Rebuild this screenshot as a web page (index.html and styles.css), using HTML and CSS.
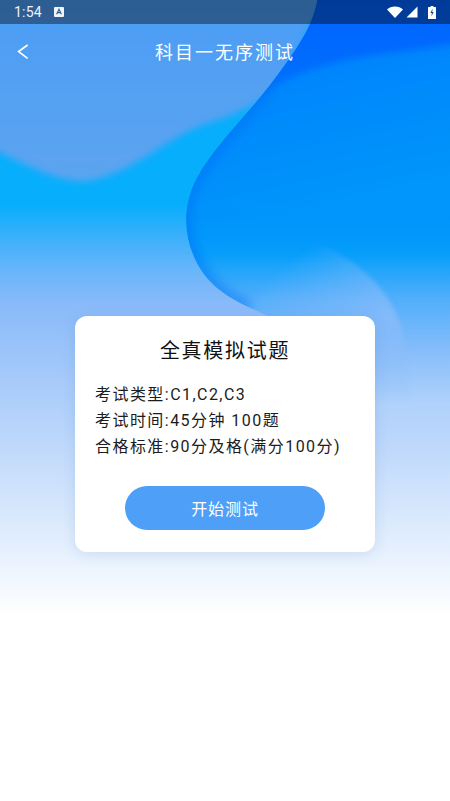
FILE: index.html
```html
<!DOCTYPE html>
<html lang="zh">
<head>
<meta charset="utf-8">
<title>科目一无序测试</title>
<link rel="stylesheet" href="styles.css">
</head>
<body>
<div class="page">
  <svg class="backdrop" viewBox="0 0 450 801" width="450" height="801" aria-hidden="true">
    <defs>
      <linearGradient id="base" x1="0" y1="0" x2="0" y2="1">
        <stop offset="0" stop-color="#07aefc"/>
        <stop offset=".255" stop-color="#07aefc"/>
        <stop offset=".30" stop-color="#40b0fb"/>
        <stop offset=".34" stop-color="#6ab6fa"/>
        <stop offset=".38" stop-color="#8abaf9"/>
        <stop offset=".52" stop-color="#b4d2fb"/>
        <stop offset=".68" stop-color="#e3effd"/>
        <stop offset=".77" stop-color="#ffffff"/>
      </linearGradient>
      <linearGradient id="light" x1="0" y1="0" x2="0" y2="1">
        <stop offset="0" stop-color="#4a9cf6"/>
        <stop offset="1" stop-color="#5da4ef"/>
      </linearGradient>
      <linearGradient id="deep" gradientUnits="userSpaceOnUse" x1="0" y1="0" x2="0" y2="480">
        <stop offset="0" stop-color="#0062ff"/>
        <stop offset=".2" stop-color="#0072fd"/>
        <stop offset=".46" stop-color="#0096fb"/>
        <stop offset=".53" stop-color="#08a0fb"/>
        <stop offset=".62" stop-color="#50aefa"/>
        <stop offset=".73" stop-color="#86bdfa"/>
        <stop offset=".84" stop-color="#b0d2fb"/>
        <stop offset="1" stop-color="#c6dcfc" stop-opacity="0"/>
      </linearGradient>
      <linearGradient id="band" gradientUnits="userSpaceOnUse" x1="320" y1="60" x2="350" y2="200">
        <stop offset="0" stop-color="#0484fc"/>
        <stop offset="1" stop-color="#0096fb"/>
      </linearGradient>
      <linearGradient id="band-fade" gradientUnits="userSpaceOnUse" x1="0" y1="195" x2="0" y2="262">
        <stop offset="0" stop-color="#fff"/>
        <stop offset="1" stop-color="#000"/>
      </linearGradient>
      <linearGradient id="veil" gradientUnits="userSpaceOnUse" x1="290" y1="260" x2="355" y2="340">
        <stop offset="0" stop-color="#8fbdfa" stop-opacity="0"/>
        <stop offset="1" stop-color="#8fbdfa" stop-opacity=".72"/>
      </linearGradient>
      <linearGradient id="veil-fade" gradientUnits="userSpaceOnUse" x1="0" y1="320" x2="0" y2="405">
        <stop offset="0" stop-color="#fff"/>
        <stop offset="1" stop-color="#000"/>
      </linearGradient>
      <mask id="band-mask" maskUnits="userSpaceOnUse" x="0" y="0" width="450" height="320">
        <rect width="450" height="320" fill="url(#band-fade)"/>
      </mask>
      <mask id="veil-mask" maskUnits="userSpaceOnUse" x="0" y="200" width="450" height="300">
        <rect y="200" width="450" height="300" fill="url(#veil-fade)"/>
      </mask>
      <clipPath id="deep-clip">
        <path d="M318 -5 C314 25 300 45 270 85 C245 118 215 145 197 178 C183 205 182 235 198 265 C215 295 245 305 268 316 L300 480 L452 480 L452 -5 Z"/>
      </clipPath>
      <filter id="wide" x="-10%" y="-10%" width="120%" height="120%"><feGaussianBlur stdDeviation="3.5"/></filter>
      <filter id="halo" x="-10%" y="-10%" width="120%" height="120%"><feGaussianBlur stdDeviation="6"/></filter>
      <filter id="soft" x="-10%" y="-10%" width="120%" height="120%"><feGaussianBlur stdDeviation="2"/></filter>
    </defs>
    <rect width="450" height="801" fill="url(#base)"/>
    <path filter="url(#wide)" d="M-20 142 C30 168 60 182 85 181 C130 176 165 138 205 124 C240 113 255 105 275 90 L330 -10 L-20 -10 Z" fill="url(#light)"/>
    <path d="M318 -5 C314 25 300 45 270 85 C245 118 215 145 197 178 C183 205 182 235 198 265 C215 295 245 305 268 316 L300 480 L452 480 L452 -5 Z" fill="url(#deep)"/>
    <g clip-path="url(#deep-clip)">
      <g mask="url(#band-mask)">
        <path filter="url(#wide)" d="M265 92 C300 70 340 58 400 52 L470 42 L470 290 L170 290 L170 150 Z" fill="url(#band)"/>
      </g>
      <path filter="url(#halo)" d="M270 85 C245 118 215 145 197 178 C183 205 182 235 198 265 C212 290 232 300 250 309" fill="none" stroke="#0070f4" stroke-opacity=".55" stroke-width="12"/>
      <g mask="url(#veil-mask)">
        <path filter="url(#soft)" d="M318 244 C355 258 392 290 402 330 C408 352 410 400 410 480 L200 480 L200 244 Z" fill="url(#veil)"/>
      </g>
    </g>
  </svg>

  <div class="status">
    <div class="status-left">
      <span class="time">1:54</span>
      <svg class="a-icon" viewBox="0 0 10 10" width="10" height="10" aria-hidden="true"><rect width="10" height="10" rx="1" fill="#f2f5f8"/><path d="M2.6 7.2 5 2.2l2.4 5M3.5 5.6h3" fill="none" stroke="#2c5c8f" stroke-width="1.1"/></svg>
    </div>
    <div class="status-right">
      <svg viewBox="0 0 16 12" width="16" height="12" aria-hidden="true"><path d="M0 3.4C2 1.4 4.8.4 8 .4s6 1 8 3L8 12Z" fill="#fff"/></svg>
      <svg viewBox="0 0 12 12" width="12" height="12" aria-hidden="true"><path d="M11.5 .5V11.5H.5Z" fill="#fff"/></svg>
      <svg class="battery" viewBox="0 0 8 13" width="8" height="13" aria-hidden="true"><path d="M2.6 0h2.8v1H7.4a.6.6 0 0 1 .6.6V12.4a.6.6 0 0 1-.6.6H.6a.6.6 0 0 1-.6-.6V1.6A.6.6 0 0 1 .6 1h2Z" fill="#fff"/><path d="M4.6 2.6 2.5 7h1.4L3.4 10.6 5.6 6H4.2Z" fill="#17458c"/></svg>
    </div>
  </div>

  <header class="bar">
    <svg class="back" viewBox="0 0 12 16" width="12" height="16" aria-hidden="true"><path d="M10.6 1 1.6 7.6 10.6 14.4" fill="none" stroke="#fff" stroke-width="1.7"/></svg>
    <h1 class="bar-title">科目一无序测试</h1>
  </header>

  <main class="card">
    <h2 class="card-title">全真模拟试题</h2>
    <div class="info">
      <p>考试类型:C1,C2,C3</p>
      <p>考试时间:45分钟 100题</p>
      <p>合格标准:90分及格(满分100分)</p>
    </div>
    <button class="start" type="button">开始测试</button>
  </main>
</div>
</body>
</html>
```
FILE: styles.css
```css
* { box-sizing: border-box; }
html, body { margin: 0; padding: 0; background: #fff; }
body { font-family: Roboto, "Noto Sans CJK SC", sans-serif; }
.page { position: relative; width: 450px; height: 801px; overflow: hidden; display: flex; flex-direction: column; align-items: center; }
.backdrop { position: absolute; left: 0; top: 0; }
.status { position: relative; width: 100%; height: 24px; flex: none; padding: 0 14px 0 14px; background: rgba(0, 0, 0, .4); display: flex; align-items: center; justify-content: space-between; color: #eef2f6; }
.status-left { display: flex; align-items: center; gap: 12px; }
.time { font-size: 14px; letter-spacing: .2px; }
.status-right { display: flex; align-items: center; gap: 3px; }
.battery { margin-left: 7px; }
.bar { position: relative; width: 100%; height: 56px; flex: none; display: flex; align-items: center; justify-content: center; }
.back { position: absolute; left: 17px; top: 20px; }
.bar-title { margin: 0 0 2px; color: #fff; font-size: 18px; font-weight: 400; letter-spacing: 2px; }
.card { position: relative; margin-top: 236px; width: 300px; height: 236px; flex: none; background: #fff; border-radius: 12px; box-shadow: 0 2px 14px rgba(60, 110, 170, .16); padding: 21px 20px 22px; display: flex; flex-direction: column; }
.card-title { margin: 0; text-align: center; color: #111; font-size: 20px; font-weight: 400; line-height: 28px; letter-spacing: 1.7px; }
.info { margin-top: 17px; }
.info p { margin: 0; color: #1c1c1c; font-size: 16px; line-height: 26px; letter-spacing: 1.45px; white-space: nowrap; }
.start { margin: auto auto 0; width: 200px; height: 44px; border: 0; border-radius: 22px; background: #4d9ff8; color: #fff; font: inherit; font-size: 16px; letter-spacing: .9px; }
```
